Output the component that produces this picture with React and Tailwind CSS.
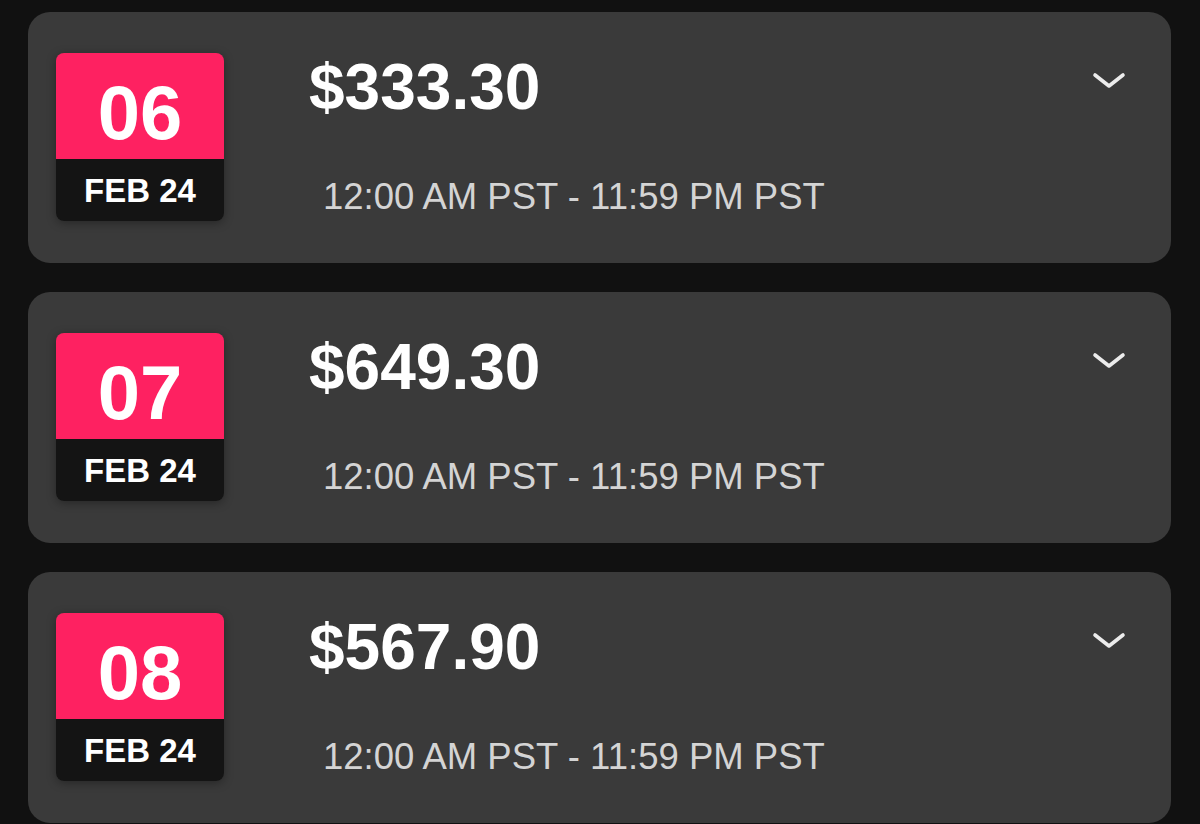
const DAYS = [
  { day: '06', month: 'FEB 24', amount: '$333.30' },
  { day: '07', month: 'FEB 24', amount: '$649.30' },
  { day: '08', month: 'FEB 24', amount: '$567.90' },
]

const font = { fontFamily: '"Liberation Sans", Arial, sans-serif' }

function Chevron() {
  return (
    <svg width="34" height="18" viewBox="0 0 34 18" fill="none">
      <polyline points="3,3 17,14 31,3" stroke="#ececec" strokeWidth="3.6" strokeLinecap="round" strokeLinejoin="round" />
    </svg>
  )
}

function DayCard({ day, month, amount }) {
  return (
    <div className="flex items-start h-[251px] rounded-[22px] bg-[#3a3a3a] pl-[28px] pt-[41px] pr-[45px]">
      {/* Date badge */}
      <div className="w-[168px] h-[168px] rounded-[8px] overflow-hidden shrink-0 shadow-[0_2px_10px_rgba(0,0,0,0.35)]">
        <div className="h-[106px] bg-[#fe2161] pt-[22px] text-center text-white font-bold text-[76px] leading-none">{day}</div>
        <div className="h-[62px] bg-[#141414] pt-[15px] text-center text-white font-bold text-[33px] leading-none">{month}</div>
      </div>

      {/* Amount + time */}
      <div className="ml-[85px] mt-[2px] flex flex-col">
        <div className="text-white font-bold text-[64px] leading-none">{amount}</div>
        <div className="mt-[60px] ml-[14px] text-[#d4d4d4] text-[36.5px] leading-none">12:00 AM PST - 11:59 PM PST</div>
      </div>

      <div className="ml-auto mt-[19px]">
        <Chevron />
      </div>
    </div>
  )
}

export default function App() {
  return (
    <div className="min-h-[824px] bg-[#111111] pt-[12px] pl-[28px] pr-[29px] flex flex-col gap-[29px] overflow-hidden" style={font}>
      {DAYS.map(d => <DayCard key={d.day} {...d} />)}
    </div>
  )
}
